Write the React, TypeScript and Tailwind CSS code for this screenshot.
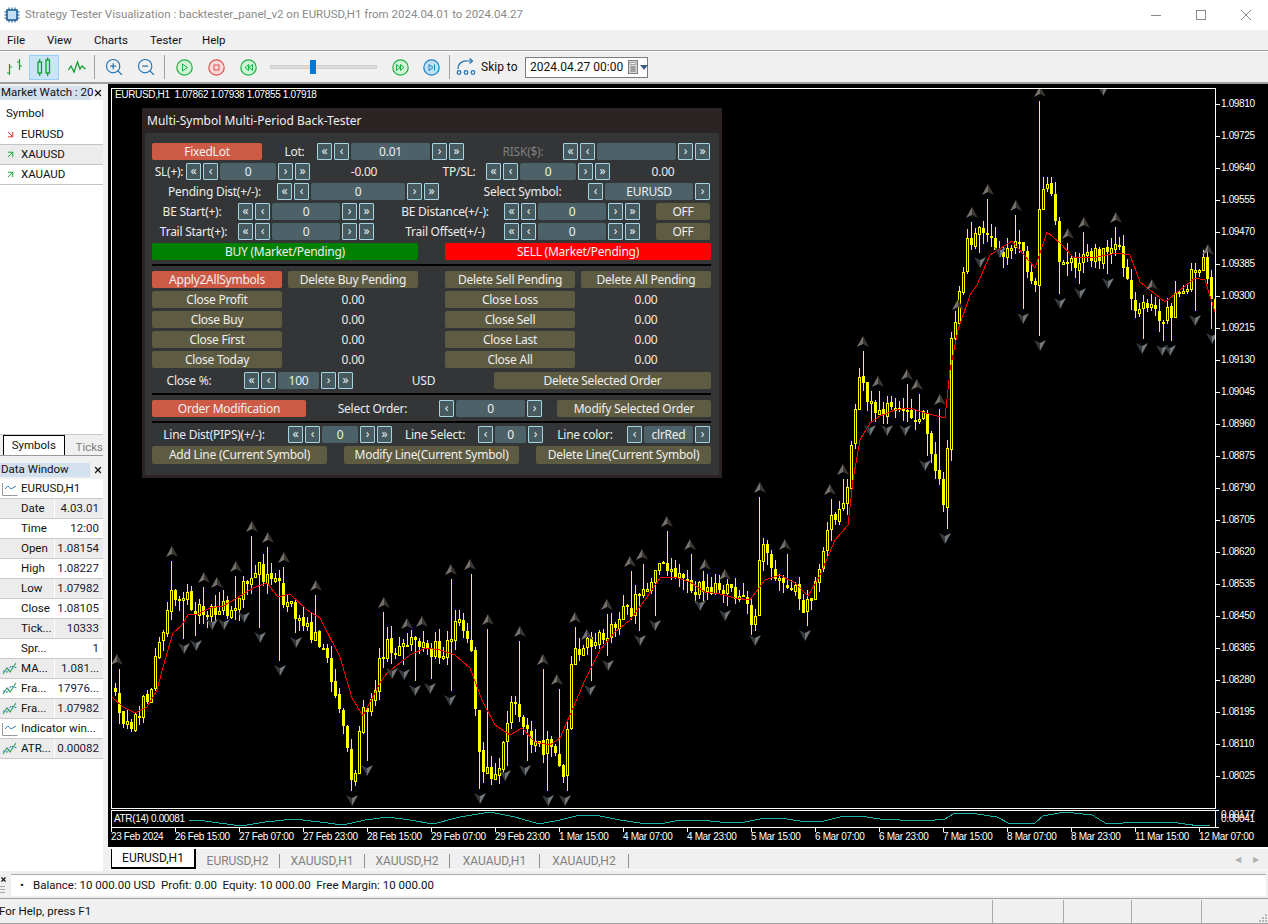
import React from "react";
import { ArrowDownRight, ArrowUpRight, X, ZoomIn, ZoomOut } from "lucide-react";

// ---- chart data, all in page coordinates ----
const pricePath: number[][] = [
  [113, 680], [120, 710], [128, 725], [140, 710], [150, 690], [160, 640], [172, 590], [185, 600], [200, 610], [215, 610],
  [235, 605], [252, 570], [270, 575], [285, 600], [300, 615], [315, 640], [330, 670], [345, 730], [352, 785], [362, 720],
  [375, 680], [385, 640], [400, 650], [420, 640], [440, 655], [455, 620], [470, 640], [480, 770], [490, 770], [500, 760],
  [510, 700], [520, 720], [530, 745], [545, 745], [555, 760], [565, 780], [570, 660], [585, 640], [600, 640], [615, 620],
  [630, 610], [645, 590], [665, 560], [680, 575], [700, 590], [720, 590], [740, 600], [755, 620], [762, 530], [772, 575],
  [790, 580], [805, 615], [815, 580], [830, 520], [845, 510], [858, 370], [872, 410], [890, 410], [905, 405], [925, 420],
  [945, 510], [950, 350], [968, 240], [985, 230], [1000, 250], [1020, 240], [1035, 290], [1040, 190], [1050, 190], [1060, 260],
  [1080, 265], [1100, 255], [1118, 250], [1135, 310], [1150, 312], [1170, 312], [1190, 275], [1205, 265], [1215, 320],
];

const maLine =
  "112,697 123,707 135,713 147,707 157,690 165,660 173,633 182,625 188,615 198,614 210,608 223,606 237,598 253,588 267,583 278,597 290,594 307,610 320,618 340,657 352,698 363,716 380,683 387,673 410,655 425,648 440,650 455,655 470,668 482,700 495,725 510,735 522,728 535,742 550,745 560,738 570,715 585,680 600,650 615,632 630,620 645,600 660,578 675,577 690,582 705,592 720,594 735,598 750,600 765,580 780,575 795,583 808,596 820,575 835,540 848,525 853,480 860,440 870,423 880,416 895,410 910,408 925,413 945,418 950,370 958,330 970,295 977,285 990,255 1012,241 1035,268 1047,232 1060,243 1073,257 1097,257 1117,253 1130,255 1140,282 1165,302 1180,290 1195,278 1205,280 1215,312";

const atrLine =
  "189,820 205,821 241,826 265,822 294,819 320,822 343,825 365,820 388,817 410,820 433,824 460,817 490,812 515,817 539,824 560,820 580,815 600,816 620,820 640,823 660,824 680,820 700,820 720,822 740,823 760,819 780,818 800,821 820,822 840,817 860,816 880,819 900,820 925,821 945,819 953,814 970,813 997,817 1010,824 1035,823 1043,816 1065,812 1092,815 1107,824 1140,822 1170,822 1200,826 1210,825";

const upMarks: number[][] = [
  [117, 660], [172, 552], [204, 578], [217, 583], [236, 567], [252, 527], [268, 538], [284, 558], [316, 586], [384, 603], [407, 624],
  [422, 622], [451, 570], [470, 565], [488, 620], [520, 632], [543, 660], [557, 680], [575, 618], [587, 635], [607, 605], [630, 562],
  [642, 555], [667, 522], [690, 545], [705, 565], [725, 575], [760, 488], [785, 545], [830, 490], [843, 470], [863, 342], [878, 382],
  [907, 375], [917, 385], [940, 400], [958, 305], [972, 213], [988, 190], [1016, 206], [1040, 92], [1068, 234], [1084, 223],
  [1116, 218], [1152, 285], [1208, 250],
];

const downMarks: number[][] = [
  [184, 648], [196, 645], [212, 624], [224, 624], [244, 617], [260, 637], [280, 670], [296, 642], [352, 800], [367, 770], [392, 673],
  [404, 674], [415, 690], [430, 688], [450, 700], [480, 798], [505, 775], [525, 770], [548, 800], [565, 800], [590, 690], [608, 665],
  [640, 640], [655, 625], [700, 605], [725, 615], [755, 640], [805, 635], [870, 430], [887, 430], [905, 430], [925, 465], [945, 538],
  [980, 262], [1000, 252], [1023, 318], [1040, 345], [1060, 303], [1080, 293], [1103, 90], [1108, 283], [1142, 348], [1162, 350],
  [1170, 350], [1195, 320], [1212, 338],
];

function pathAt(x: number) {
  for (let i = 1; i < pricePath.length; i++) {
    if (x <= pricePath[i][0]) {
      const [x0, y0] = pricePath[i - 1];
      const [x1, y1] = pricePath[i];
      return y0 + ((y1 - y0) * (x - x0)) / (x1 - x0);
    }
  }
  return pricePath[pricePath.length - 1][1];
}

let seed = 1234567;
function rnd() {
  seed = (seed * 16807) % 2147483647;
  return seed / 2147483647;
}

function buildCandles() {
  const list: { x: number; open: number; close: number; high: number; low: number }[] = [];
  let prev = pathAt(115);
  for (let x = 115; x <= 1215; x += 4) {
    const close = pathAt(x) + (rnd() - 0.5) * 20;
    const open = prev + (rnd() - 0.5) * 3;
    list.push({
      x,
      open,
      close,
      high: Math.min(open, close) - rnd() * 12,
      low: Math.max(open, close) + rnd() * 12,
    });
    prev = close;
  }
  for (const [mx, my] of upMarks) {
    const c = list[Math.round((mx - 115) / 4)];
    if (c) c.high = Math.min(c.high, my + 9);
  }
  for (const [mx, my] of downMarks) {
    const c = list[Math.round((mx - 115) / 4)];
    if (c && my > 100 && my < 805) c.low = Math.max(c.low, my - 9);
  }
  return list;
}

const candles = buildCandles();

const prices = [
  "1.09810", "1.09725", "1.09640", "1.09555", "1.09470", "1.09385", "1.09300", "1.09215", "1.09130", "1.09045", "1.08960",
  "1.08875", "1.08790", "1.08705", "1.08620", "1.08535", "1.08450", "1.08365", "1.08280", "1.08195", "1.08110", "1.08025",
];

const times = [
  "23 Feb 2024", "26 Feb 15:00", "27 Feb 07:00", "27 Feb 23:00", "28 Feb 15:00", "29 Feb 07:00", "29 Feb 23:00", "1 Mar 15:00",
  "4 Mar 07:00", "4 Mar 23:00", "5 Mar 15:00", "6 Mar 07:00", "6 Mar 23:00", "7 Mar 15:00", "8 Mar 07:00", "8 Mar 23:00",
  "11 Mar 15:00", "12 Mar 07:00",
];

const chartTabs = ["EURUSD,H2", "XAUUSD,H1", "XAUUSD,H2", "XAUAUD,H1", "XAUAUD,H2"];

// ---- small icons ----
const ChipIcon = () => (
  <svg width="16" height="16" viewBox="0 0 16 16" fill="none">
    <rect x="3" y="3" width="10" height="10" fill="#bfe0f5" stroke="#0a4f8f" strokeWidth="1.4" />
    <path d="M5 0.5V3M8 0.5V3M11 0.5V3M5 13V15.5M8 13V15.5M11 13V15.5M0.5 5H3M0.5 8H3M0.5 11H3M13 5H15.5M13 8H15.5M13 11H15.5" stroke="#0a4f8f" />
  </svg>
);

const BarsIcon = () => (
  <svg width="18" height="20" viewBox="0 0 18 20" fill="none" stroke="#1c9a30" strokeWidth="1.2">
    <path d="M3.5 7V18M1 16H3.5M3.5 10H6" />
    <path d="M13.5 2V13M11 5H13.5M13.5 9H16" />
  </svg>
);

const CandlesIcon = () => (
  <svg width="16" height="20" viewBox="0 0 16 20" fill="none" stroke="#0aa32a" strokeWidth="1.3">
    <rect x="2" y="5" width="3.5" height="11" />
    <rect x="10" y="3" width="3.5" height="13" />
    <path d="M3.7 2V5M3.7 16V19M11.7 0.5V3M11.7 16V19" />
  </svg>
);

const LineIcon = () => (
  <svg width="18" height="14" viewBox="0 0 18 14" fill="none" stroke="#12a030" strokeWidth="1.3">
    <path d="M0.5 10L3 6L6 12L9.5 2L12 9L14 6L17.5 9" />
  </svg>
);

const RoundButton = ({ kind, children }: { kind: "green" | "red" | "blue"; children: React.ReactNode }) => {
  const fill = kind === "green" ? "#d2f5d8" : kind === "red" ? "#fbd9d9" : "#bfe0f7";
  const stroke = kind === "green" ? "#17b23f" : kind === "red" ? "#e0504f" : "#1f7fc4";
  return (
    <svg className="shrink-0" width="17" height="17" viewBox="0 0 17 17" fill="none" stroke={stroke}>
      <circle cx="8.5" cy="8.5" r="7.7" fill={fill} strokeWidth="1.2" />
      {children}
    </svg>
  );
};

const SkipIcon = () => (
  <svg width="20" height="18" viewBox="0 0 20 18" fill="none" stroke="#1d6fb0" strokeWidth="1.2">
    <path d="M2 11C2 5 7 2.500 11 3H16" />
    <path d="M13.500 0.500L16.500 3L13.500 5.500" />
    <circle cx="3" cy="14.500" r="1.800" />
    <circle cx="10" cy="14.500" r="1.800" />
    <circle cx="17" cy="14.500" r="1.800" />
  </svg>
);

const CalendarIcon = () => (
  <svg className="block" width="10" height="14" viewBox="0 0 10 14" fill="#a8a8a8" stroke="#808080">
    <rect x="0.500" y="0.500" width="9" height="13" fill="#d8d8d8" />
    <rect x="2" y="2.500" width="6" height="2" fill="#f4f4f4" strokeWidth="0.6" />
    <path d="M2 7H8M2 9H8M2 11H8M4 6V12M6 6V12" strokeWidth="0.8" />
  </svg>
);

const WindowIcon = () => (
  <svg className="shrink-0" width="16" height="14" viewBox="0 0 16 14" fill="none">
    <path d="M0.500 1V13.500H15.500" stroke="#9a9a9a" />
    <path d="M3 7L6 4L9 7L14 4" stroke="#3b7fb5" />
  </svg>
);

const IndicatorIcon = () => (
  <svg className="block" width="16" height="14" viewBox="0 0 16 14" fill="none" strokeWidth="1.100">
    <path d="M1 12L5 6L8 10L14 1" stroke="#2ea44f" />
    <path d="M1 9L5 10L9 4L15 6" stroke="#3b7fb5" strokeDasharray="2 1" />
  </svg>
);

const Fractal = ({ x, y, up }: { x: number; y: number; up: boolean }) => {
  if (up) {
    return (
      <g>
        <polygon points={`${x},${y - 6} ${x - 6},${y + 5} ${x},${y + 2}`} fill="#75706a" />
        <polygon points={`${x},${y - 6} ${x + 6},${y + 5} ${x},${y + 2}`} fill="#3a3733" />
      </g>
    );
  }
  return (
    <g>
      <polygon points={`${x},${y + 6} ${x - 6},${y - 5} ${x},${y - 2}`} fill="#35393b" />
      <polygon points={`${x},${y + 6} ${x + 6},${y - 5} ${x},${y - 2}`} fill="#70767a" />
    </g>
  );
};

// ---- panel parts ----
const Btn = ({ className, children }: { className: string; children: React.ReactNode }) => (
  <div className={`h-full flex items-center justify-center rounded-[2px] text-[#efefef] ${className}`}>{children}</div>
);

const Arrow = ({ children }: { children: string }) => (
  <div className="w-[15px] h-full shrink-0 flex items-center justify-center border border-[#a5d5e2] rounded-[1px] bg-[#465a60] text-[#e4f1f4] text-[12px] pb-[1px]">
    {children}
  </div>
);

const Stepper = ({ inputClass, value, double = true }: { inputClass: string; value: string; double?: boolean }) => (
  <div className="h-full flex gap-[2px] shrink-0">
    {double && <Arrow>«</Arrow>}
    <Arrow>‹</Arrow>
    <div className={`h-full flex items-center justify-center rounded-[2px] bg-[#4d6268] text-[#efefef] ${inputClass}`}>{value}</div>
    <Arrow>›</Arrow>
    {double && <Arrow>»</Arrow>}
  </div>
);

const Label = ({ className, children }: { className: string; children: React.ReactNode }) => (
  <div className={`h-full flex items-center justify-center shrink-0 whitespace-nowrap ${className}`}>{children}</div>
);

const OLIVE = "bg-[#5e5b43]";

const Panel = () => (
  <div className="absolute left-[34px] top-[24px] w-[580px] h-[370px] bg-[#2c2324] pl-[3px] pr-[3px] pb-[3px] flex flex-col text-[12px] tracking-[-0.25px] font-['Noto_Sans',sans-serif] text-[#ececec] leading-none">
    <div className="h-[25px] flex items-center pl-[2px] tracking-normal text-[#f0f0f0] shrink-0">Multi-Symbol Multi-Period Back-Tester</div>
    <div className="flex-1 bg-[#333536] pl-[7px] pt-[10px] flex flex-col">
      <div className="flex h-[17px]">
        <Btn className="w-[110px] bg-[#cd5a45]">FixedLot</Btn>
        <Label className="w-[55px] pl-[10px]">Lot:</Label>
        <Stepper inputClass="w-[79px]" value="0.01" />
        <Label className="w-[99px] pl-[19px] text-[#808080]">RISK($):</Label>
        <Stepper inputClass="w-[79px]" value="" />
      </div>
      <div className="flex h-[17px] mt-[3px]">
        <Label className="w-[34px]">SL(+):</Label>
        <Stepper inputClass="w-[56px]" value="0" />
        <Label className="w-[108px]">-0.00</Label>
        <Label className="w-[68px] pl-[14px]">TP/SL:</Label>
        <Stepper inputClass="w-[56px]" value="0" />
        <Label className="w-[106px]">0.00</Label>
      </div>
      <div className="flex h-[17px] mt-[3px]">
        <Label className="w-[125px]">Pending Dist(+/-):</Label>
        <Stepper inputClass="w-[94px]" value="0" />
        <Label className="w-[149px] pl-[18px]">Select Symbol:</Label>
        <Stepper inputClass="w-[88px]" value="EURUSD" double={false} />
      </div>
      <div className="flex h-[17px] mt-[3px]">
        <Label className="w-[86px] pr-[6px]">BE Start(+):</Label>
        <Stepper inputClass="w-[68px]" value="0" />
        <Label className="w-[130px] pl-[12px]">BE Distance(+/-):</Label>
        <Stepper inputClass="w-[68px]" value="0" />
        <Btn className={`w-[54px] ml-[16px] ${OLIVE}`}>OFF</Btn>
      </div>
      <div className="flex h-[17px] mt-[3px]">
        <Label className="w-[86px] pr-[3px]">Trail Start(+):</Label>
        <Stepper inputClass="w-[68px]" value="0" />
        <Label className="w-[130px] pl-[12px]">Trail Offset(+/-)</Label>
        <Stepper inputClass="w-[68px]" value="0" />
        <Btn className={`w-[54px] ml-[16px] ${OLIVE}`}>OFF</Btn>
      </div>
      <div className="flex h-[17px] mt-[3px]">
        <Btn className="w-[266px] bg-[#008000]">BUY (Market/Pending)</Btn>
        <Btn className="w-[266px] ml-[27px] bg-[#ff0000]">SELL (Market/Pending)</Btn>
      </div>
      <div className="w-[559px] h-[2px] bg-black mt-[4px]" />
      <div className="flex h-[17px] mt-[5px]">
        <Btn className="w-[130px] bg-[#cd5a45]">Apply2AllSymbols</Btn>
        <Btn className={`w-[130px] ml-[6px] ${OLIVE}`}>Delete Buy Pending</Btn>
        <Btn className={`w-[130px] ml-[27px] ${OLIVE}`}>Delete Sell Pending</Btn>
        <Btn className={`w-[130px] ml-[6px] ${OLIVE}`}>Delete All Pending</Btn>
      </div>
      {[
        ["Close Profit", "Close Loss"],
        ["Close Buy", "Close Sell"],
        ["Close First", "Close Last"],
        ["Close Today", "Close All"],
      ].map(([a, b]) => (
        <div key={a} className="flex h-[17px] mt-[3px]">
          <Btn className={`w-[130px] ${OLIVE}`}>{a}</Btn>
          <Label className="w-[136px] pl-[6px]">0.00</Label>
          <Btn className={`w-[130px] ml-[27px] ${OLIVE}`}>{b}</Btn>
          <Label className="w-[142px]">0.00</Label>
        </div>
      ))}
      <div className="flex h-[17px] mt-[4px]">
        <Label className="w-[92px] pr-[18px]">Close %:</Label>
        <Stepper inputClass="w-[41px]" value="100" />
        <Label className="w-[141px]">USD</Label>
        <Btn className={`w-[217px] ${OLIVE}`}>Delete Selected Order</Btn>
      </div>
      <div className="w-[559px] h-[2px] bg-black mt-[4px]" />
      <div className="flex h-[17px] mt-[5px]">
        <Btn className="w-[154px] bg-[#cd5a45]">Order Modification</Btn>
        <Label className="w-[133px]">Select Order:</Label>
        <Stepper inputClass="w-[69px]" value="0" double={false} />
        <Btn className={`w-[154px] ml-[15px] ${OLIVE}`}>Modify Selected Order</Btn>
      </div>
      <div className="w-[559px] h-[2px] bg-black mt-[4px]" />
      <div className="flex h-[17px] mt-[3px]">
        <Label className="w-[136px] pr-[12px]">Line Dist(PIPS)(+/-):</Label>
        <Stepper inputClass="w-[36px]" value="0" />
        <Label className="w-[86px]">Line Select:</Label>
        <Stepper inputClass="w-[31px]" value="0" double={false} />
        <Label className="w-[84px]">Line color:</Label>
        <Stepper inputClass="w-[49px]" value="clrRed" double={false} />
      </div>
      <div className="flex h-[18px] mt-[3px]">
        <Btn className={`w-[175px] ${OLIVE}`}>Add Line (Current Symbol)</Btn>
        <Btn className={`w-[175px] ml-[17px] ${OLIVE}`}>Modify Line(Current Symbol)</Btn>
        <Btn className={`w-[175px] ml-[17px] ${OLIVE}`}>Delete Line(Current Symbol)</Btn>
      </div>
    </div>
  </div>
);

// ---- chart ----
const Chart = () => (
  <div className="relative w-[1160px] h-[765px] bg-black border-b-2 border-white font-['Liberation_Sans',sans-serif] text-[10px] tracking-[-0.35px] text-white leading-none overflow-hidden shrink-0">
    <div className="flex">
      <div className="w-[1108px] pl-[3px] shrink-0">
        <div className="relative mt-[4px] w-[1105px] h-[721px] border border-white">
          <svg width="1103" height="719" viewBox="112 89 1103 719" className="block">
            {candles.map((c) => {
              const top = Math.round(Math.min(c.open, c.close));
              const h = Math.max(2, Math.round(Math.abs(c.open - c.close)));
              const up = c.close < c.open;
              return (
                <g key={c.x} shapeRendering="crispEdges">
                  <line x1={c.x + 0.5} x2={c.x + 0.5} y1={Math.round(c.high)} y2={Math.round(c.low)} stroke="#ffff00" />
                  {up ? (
                    <rect x={c.x - 0.5} y={top + 0.5} width={2} height={h} fill="#000" stroke="#ffff00" />
                  ) : (
                    <rect x={c.x - 1} y={top} width={3} height={h} fill="#ffff00" />
                  )}
                </g>
              );
            })}
            <polyline points={maLine} fill="none" stroke="#ff0000" strokeWidth="1" shapeRendering="crispEdges" />
            {upMarks.map(([x, y]) => (
              <Fractal key={`u${x}`} x={x} y={y} up />
            ))}
            {downMarks.map(([x, y]) => (
              <Fractal key={`d${x}`} x={x} y={y} up={false} />
            ))}
          </svg>
          <div className="absolute left-[3px] top-[1px] whitespace-pre bg-black">EURUSD,H1  1.07862 1.07938 1.07855 1.07918</div>
        </div>
        <div className="relative mt-[1px] w-[1105px] h-[18px] border border-white">
          <svg width="1103" height="16" viewBox="112 811 1103 16" className="block">
            <polyline points={atrLine} fill="none" stroke="#20b2aa" shapeRendering="crispEdges" />
          </svg>
          <div className="absolute left-[2px] top-[3px] whitespace-nowrap bg-black">ATR(14) 0.00081</div>
          <div className="absolute right-[-4px] top-[-1px] w-[3px] h-px bg-white" />
          <div className="absolute right-[-4px] bottom-[-1px] w-[3px] h-px bg-white" />
        </div>
        <div className="flex">
          {times.map((t) => (
            <div key={t} className="w-[64px] shrink-0">
              <div className="w-px h-[4px] bg-white" />
              <div className="whitespace-nowrap">{t}</div>
            </div>
          ))}
        </div>
      </div>
      <div className="flex-1 pt-[4px] flex flex-col">
        {prices.map((p) => (
          <div key={p} className="h-[32px] flex items-center shrink-0">
            <div className="w-[4px] h-px bg-white" />
            <span className="ml-[1px]">{p}</span>
          </div>
        ))}
        <div className="h-[4px] flex items-center mt-[21px]">
          <span className="ml-[5px]">0.00177</span>
        </div>
        <div className="h-[4px] flex items-center">
          <span className="ml-[5px]">0.00041</span>
        </div>
      </div>
    </div>
    <Panel />
  </div>
);

// ---- side column ----
const dockTitle = "h-[14px] flex items-center shrink-0";

const Sidebar = () => (
  <div className="w-[108px] h-full shrink-0 pr-[5px] flex flex-col">
    <div className="h-[2px] shrink-0" />
    <div className={dockTitle}>
      <div className="w-[90px] h-full bg-[#d3e0ee] pl-[1px] flex items-center whitespace-nowrap">Market Watch : 20</div>
      <X className="w-[10px] h-[10px] ml-[3px]" strokeWidth={3} />
    </div>
    <div className="h-[335px] bg-white shrink-0 border-b border-[#c8c8c8]">
      <div className="h-[25px] flex items-center pl-[6px] pt-[4px] border-b border-transparent">Symbol</div>
      {[
        ["EURUSD", false, ""],
        ["XAUUSD", true, "bg-[#ececec]"],
        ["XAUAUD", true, ""],
      ].map(([name, up, bg]) => (
        <div key={name as string} className={`h-[20px] flex items-center pl-[5px] border-b border-[#c4c4c4] ${bg}`}>
          {up ? <ArrowUpRight className="w-[11px] h-[11px] text-[#0aa32a]" /> : <ArrowDownRight className="w-[11px] h-[11px] text-[#e0282a]" />}
          <span className="ml-[5px]">{name as string}</span>
        </div>
      ))}
    </div>
    <div className="h-[21px] flex items-end shrink-0 pl-[3px] border-b border-[#9a9a9a]">
      <div className="w-[63px] h-[20px] bg-white border border-black border-b-0 flex items-center justify-center">Symbols</div>
      <div className="pl-[11px] pb-[2px] text-[#808080]">Ticks</div>
    </div>
    <div className="h-[7px] shrink-0" />
    <div className={dockTitle}>
      <div className="w-[90px] h-full bg-[#d3e0ee] pl-[1px] flex items-center">Data Window</div>
      <X className="w-[10px] h-[10px] ml-[3px]" strokeWidth={3} />
    </div>
    <div className="flex-1 bg-white mt-[2px]">
      <div className="h-[20px] flex items-center pl-[2px] border-b border-[#c8c8c8]">
        <WindowIcon />
        <span className="ml-[3px]">EURUSD,H1</span>
      </div>
      {[
        ["Date", "4.03.01", 1, 0],
        ["Time", "12:00", 0, 0],
        ["Open", "1.08154", 1, 0],
        ["High", "1.08227", 0, 0],
        ["Low", "1.07982", 1, 0],
        ["Close", "1.08105", 0, 0],
        ["Tick...", "10333", 1, 0],
        ["Spr...", "1", 0, 0],
        ["MA...", "1.081...", 1, 1],
        ["Fra...", "17976...", 0, 1],
        ["Fra...", "1.07982", 1, 1],
      ].map(([name, value, grey, icon], i) => (
        <div key={i} className={`h-[20px] flex items-center border-b border-[#c8c8c8] ${grey ? "bg-[#ececec]" : ""}`}>
          <div className="w-[21px] pl-[2px] shrink-0">{icon ? <IndicatorIcon /> : null}</div>
          <div className="w-[33px] shrink-0 whitespace-nowrap">{name}</div>
          <div className="flex-1 h-full border-l border-white flex items-center justify-end pr-[4px] whitespace-nowrap text-[#1a1a30]">{value}</div>
        </div>
      ))}
      <div className="h-[20px] flex items-center pl-[2px] border-b border-[#c8c8c8]">
        <WindowIcon />
        <span className="ml-[3px] whitespace-nowrap">Indicator win...</span>
      </div>
      <div className="h-[20px] flex items-center bg-[#ececec] border-b border-[#c8c8c8]">
        <div className="w-[21px] pl-[2px] shrink-0">
          <IndicatorIcon />
        </div>
        <div className="w-[33px] shrink-0">ATR...</div>
        <div className="flex-1 h-full border-l border-white flex items-center justify-end pr-[4px] text-[#1a1a30]">0.00082</div>
      </div>
    </div>
  </div>
);

export default function App() {
  return (
    <div className="w-[1268px] h-[924px] bg-[#f0f0f0] flex flex-col overflow-hidden font-['Roboto',sans-serif] text-[11.5px] leading-none text-[#111]">
      {/* title bar */}
      <div className="h-[30px] bg-white flex items-center shrink-0 pl-[4px]">
        <ChipIcon />
        <span className="ml-[5px] text-[#8a8a8a] whitespace-nowrap">Strategy Tester Visualization : backtester_panel_v2 on EURUSD,H1 from 2024.04.01 to 2024.04.27</span>
        <div className="ml-auto flex text-[#8a8a8a]">
          <div className="w-[45px] flex justify-center">
            <svg width="10" height="10" viewBox="0 0 10 10" stroke="currentColor"><path d="M0 5.500H10" /></svg>
          </div>
          <div className="w-[45px] flex justify-center">
            <svg width="10" height="10" viewBox="0 0 10 10" fill="none" stroke="currentColor"><rect x="0.500" y="0.500" width="9" height="9" /></svg>
          </div>
          <div className="w-[45px] flex justify-center">
            <svg width="10" height="10" viewBox="0 0 10 10" stroke="currentColor"><path d="M0 0L10 10M10 0L0 10" /></svg>
          </div>
        </div>
      </div>
      {/* menu */}
      <div className="h-[21px] flex items-center shrink-0 pl-[7px] pt-[1px] border-b border-[#a0a0a0]">
        <div className="w-[40px]">File</div>
        <div className="w-[47px]">View</div>
        <div className="w-[56px]">Charts</div>
        <div className="w-[52px]">Tester</div>
        <div>Help</div>
      </div>
      {/* toolbar */}
      <div className="h-[30px] flex items-center shrink-0 border-t border-white border-b-2 border-b-[#a0a0a0] box-content">
        <div className="w-[29px] flex justify-center"><BarsIcon /></div>
        <div className="w-[30px] h-[25px] flex items-center justify-center bg-[#cce4f7] border border-[#99d1f5]"><CandlesIcon /></div>
        <div className="w-[35px] flex justify-center"><LineIcon /></div>
        <div className="w-px h-[24px] bg-[#a0a0a0]" />
        <div className="w-[38px] flex justify-center"><ZoomIn className="w-[20px] h-[20px] text-[#1e73b5]" strokeWidth={1.4} /></div>
        <div className="w-[26px] flex justify-center"><ZoomOut className="w-[20px] h-[20px] text-[#1e73b5]" strokeWidth={1.4} /></div>
        <div className="w-[5px]" />
        <div className="w-px h-[24px] bg-[#a0a0a0]" />
        <div className="w-[38px] flex justify-center">
          <RoundButton kind="green"><path d="M6.500 5L11.500 8.500L6.500 12Z" /></RoundButton>
        </div>
        <div className="w-[26px] flex justify-center">
          <RoundButton kind="red"><rect x="6" y="6" width="5" height="5" /></RoundButton>
        </div>
        <div className="w-[38px] flex justify-center">
          <RoundButton kind="green"><path d="M8.500 5.500L5 8.500L8.500 11.500ZM12.500 5.500L9 8.500L12.500 11.500Z" /></RoundButton>
        </div>
        <div className="w-[3px]" />
        <div className="relative w-[107px] h-[4px] bg-[#dcdcdc] border border-[#cfcfcf]">
          <div className="absolute left-[39px] top-[-6px] w-[6px] h-[14px] bg-[#0078d7]" />
        </div>
        <div className="w-[46px] flex justify-center">
          <RoundButton kind="green"><path d="M4.500 5.500L8 8.500L4.500 11.500ZM8.500 5.500L12 8.500L8.500 11.500Z" /></RoundButton>
        </div>
        <div className="w-[17px] flex justify-center">
          <RoundButton kind="blue"><path d="M6 5.500L10 8.500L6 11.500ZM11.500 5.500V11.500" /></RoundButton>
        </div>
        <div className="w-[9px]" />
        <div className="w-px h-[24px] bg-[#a0a0a0]" />
        <div className="w-[31px] flex justify-center"><SkipIcon /></div>
        <div className="w-[44px] text-[12px]">Skip to</div>
        <div className="w-[123px] h-[21px] bg-white border border-[#7a7a7a] flex items-center pl-[4px] text-[12px]">
          <span className="whitespace-nowrap">2024.04.27 00:00</span>
          <span className="ml-[5px] shrink-0"><CalendarIcon /></span>
          <svg className="ml-[2px] shrink-0" width="8" height="5" viewBox="0 0 8 5" fill="#3d5f80"><path d="M0 0H8L4 5Z" /></svg>
        </div>
      </div>
      {/* main */}
      <div className="flex h-[787px] shrink-0">
        <Sidebar />
        <div className="flex flex-col">
          <Chart />
          <div className="flex h-[21px] items-start pl-[3px] border-b border-[#fafafa] text-[#808080] text-[12px]">
            <div className="w-[85px] h-[20px] bg-white border border-black border-t-0 flex items-center justify-center text-[#111] border-r-2 border-b-2">EURUSD,H1</div>
            {chartTabs.map((t, i) => (
              <div key={t} className={`h-[14px] mt-[5px] flex items-center justify-center border-r border-[#909090] ${i === 0 ? "w-[84px]" : i === 3 ? "w-[90px]" : i === 4 ? "w-[89px]" : "w-[85px]"}`}>{t}</div>
            ))}
            <div className="ml-auto mt-[7px] flex gap-[12px] pr-[9px] text-[#b0b0b0] text-[8px]">
              <span>◀</span>
              <span>▶</span>
            </div>
          </div>
        </div>
      </div>
      {/* journal */}
      <div className="flex h-[28px] shrink-0 pt-[3px] pr-[2px] border-b border-[#a0a0a0]">
        <div className="w-[11px] flex flex-col items-start gap-[3px] pt-[2px] shrink-0">
          <X className="w-[7px] h-[7px]" strokeWidth={4} />
          <div className="w-[5px] h-[7px] border-y border-[#a8a8a8] bg-[linear-gradient(#a8a8a8,#a8a8a8)] bg-[length:100%_1px] bg-center bg-no-repeat" />
        </div>
        <div className="flex-1 h-[22px] bg-white border-t border-[#a8a8a8] flex items-center pl-[9px] whitespace-nowrap">
          <span className="w-[13px] shrink-0">•</span>
          <span className="whitespace-pre">Balance: 10 000.00 USD  Profit: 0.00  Equity: 10 000.00  Free Margin: 10 000.00</span>
        </div>
      </div>
      {/* status bar */}
      <div className="flex-1 flex items-center border-b border-[#a0a0a0] mt-[1px]">
        <div className="w-[993px] -ml-[1px] whitespace-nowrap">For Help, press F1</div>
        <div className="w-[71px] h-full border-l border-[#a8a8a8]" />
        <div className="w-[68px] h-full border-l border-[#a8a8a8]" />
        <div className="w-[70px] h-full border-l border-[#a8a8a8]" />
        <div className="flex-1 h-full border-l border-[#a8a8a8] flex items-end justify-end">
          <svg className="mb-[1px] mr-[1px]" width="8" height="8" viewBox="0 0 8 8" fill="#b8b8b8">
            <path d="M6 0H8V2H6ZM3 3H5V5H3ZM6 3H8V5H6ZM0 6H2V8H0ZM3 6H5V8H3ZM6 6H8V8H6Z" />
          </svg>
        </div>
      </div>
    </div>
  );
}
